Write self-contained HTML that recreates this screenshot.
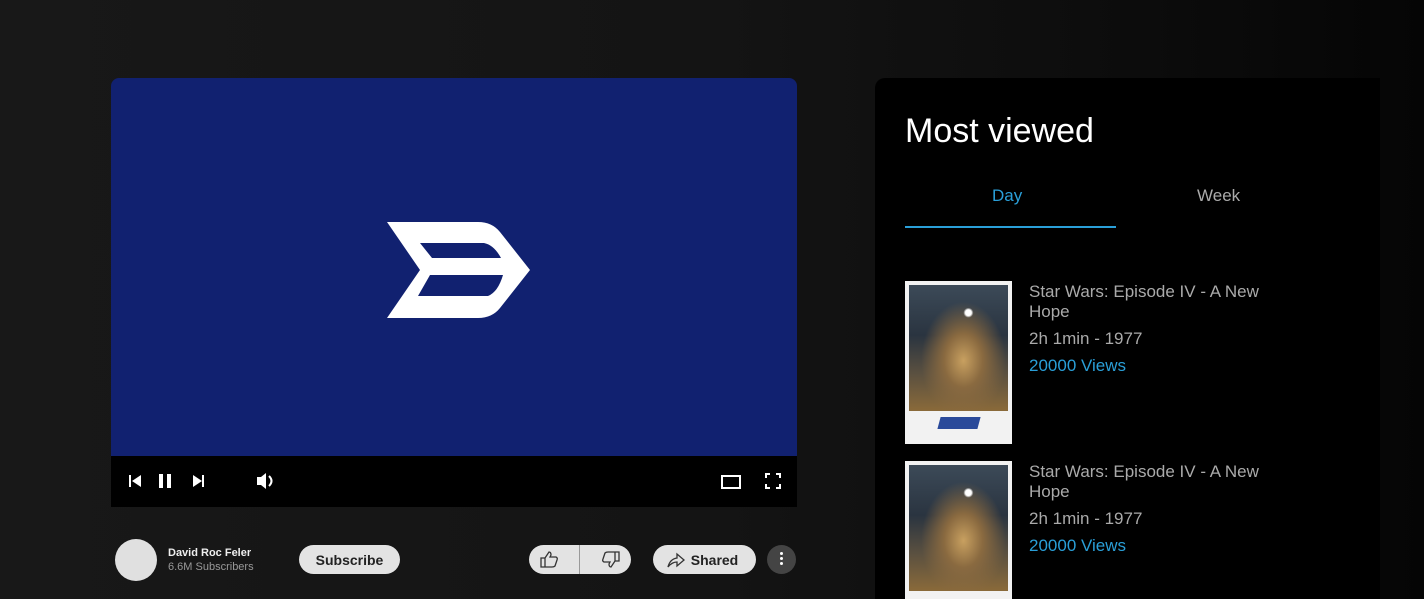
<!DOCTYPE html>
<html><head><style>
*{margin:0;padding:0;box-sizing:border-box}
html,body{width:1424px;height:599px;overflow:hidden}
body{background:linear-gradient(90deg,#181818 0%,#141414 50%,#0c0c0c 80%,#050505 100%);font-family:"Liberation Sans",sans-serif;position:relative}
.abs{position:absolute}
.video{left:111px;top:78px;width:686px;height:378px;background:#112170;border-radius:8px 8px 0 0}
.ctrl{left:111px;top:456px;width:686px;height:51px;background:#000}
.pill{background:#e3e3e3;border-radius:15px;color:#222;font-weight:bold;font-size:14px;display:flex;align-items:center;justify-content:center}
.panel{left:875px;top:78px;width:505px;height:521px;background:#000;border-radius:10px 0 0 0}
.poster{width:107px;height:163px;background:#f2f2f2;padding:4px 4px 0 4px;overflow:hidden}
.pimg{width:99px;height:126px;background:radial-gradient(circle at 60% 22%,#fff 0 3px,transparent 5px),radial-gradient(ellipse at 55% 60%,#c8a060 0,#8a6a40 25%,transparent 55%),linear-gradient(180deg,#3c4a58 0%,#2a3440 40%,#5a5040 70%,#8a6a3a 100%)}
.logo2{margin:6px 0 0 30px;width:40px;height:12px;background:#2a4a9a;transform:skewX(-15deg)}
.t{color:#aaa;font-size:17px;line-height:20px}
</style></head><body>
<div class="abs video"></div>
<svg class="abs" style="left:380px;top:215px" width="160" height="110" viewBox="380 215 160 110">
<path fill="#fff" fill-rule="evenodd" d="M387 222 L478 222 Q492 222 500 232 L530 270 L500 308 Q492 318 478 318 L387 318 L420 270 Z M420 243 L484 243 Q494 245 501 258 L432 258 Z M430 275 L503 275 Q498 292 488 296 L418 296 Z"/>
</svg>
<div class="abs ctrl"></div>
<svg class="abs" style="left:111px;top:456px" width="686" height="51">
<g fill="#fff">
<rect x="18" y="19" width="2" height="12"/><path d="M30 19 L21 25 L30 31Z"/>
<rect x="48" y="18" width="4" height="14"/><rect x="56" y="18" width="4" height="14"/>
<path d="M82 19 L91 25 L82 31Z"/><rect x="91" y="19" width="2" height="12"/>
<path d="M146 21 L150 21 L155 17 L155 33 L150 29 L146 29Z"/>
<path d="M158 20 Q163 25 158 30" stroke="#fff" stroke-width="2" fill="none"/>
</g>
<rect x="611" y="20" width="18" height="12" fill="none" stroke="#fff" stroke-width="2"/>
<path d="M655 22 V18 H659 M665 18 H669 V22 M669 28 V32 H665 M659 32 H655 V28" stroke="#fff" stroke-width="2" fill="none"/>
</svg>
<div class="abs" style="left:115px;top:539px;width:42px;height:42px;border-radius:50%;background:#e0e0e0"></div>
<div class="abs" style="left:168px;top:547px;color:#eee;font-size:11px;font-weight:bold">David Roc Feler</div>
<div class="abs" style="left:168px;top:561px;color:#999;font-size:11px">6.6M Subscribers</div>
<div class="abs pill" style="left:299px;top:545px;width:101px;height:29px">Subscribe</div>
<div class="abs pill" style="left:529px;top:545px;width:102px;height:29px"></div>
<div class="abs" style="left:579px;top:545px;width:1px;height:29px;background:#999"></div>
<svg class="abs" style="left:529px;top:545px" width="102" height="29"><g fill="none" stroke="#333" stroke-width="1.3"><path d="M12 13 H16 V22 H12Z M16 13 L20 7 Q22 7 22 10 L21 12 H27 Q29 13 28 15 L26 21 Q25 22 23 22 H16"/><path d="M90 16 H86 V7 H90Z M86 16 L82 22 Q80 22 80 19 L81 17 H75 Q73 16 74 14 L76 8 Q77 7 79 7 H86"/></g></svg>
<div class="abs pill" style="left:653px;top:545px;width:103px;height:29px;padding-left:20px">Shared</div>
<svg class="abs" style="left:665px;top:550px" width="22" height="20"><path d="M3 17 Q5 9 12 8 V4 L19 10 L12 16 V12 Q7 12 3 17Z" fill="none" stroke="#333" stroke-width="1.3"/></svg>
<div class="abs" style="left:767px;top:545px;width:29px;height:29px;border-radius:50%;background:#444"></div>
<div class="abs" style="left:780px;top:552px;width:3px;height:3px;background:#fff;border-radius:50%;box-shadow:0 5px #fff,0 10px #fff"></div>
<div class="abs panel"></div>
<div class="abs" style="left:905px;top:112px;color:#fff;font-size:34px">Most viewed</div>
<div class="abs" style="left:992px;top:186px;color:#2a9fd8;font-size:17px">Day</div>
<div class="abs" style="left:1197px;top:186px;color:#aaa;font-size:17px">Week</div>
<div class="abs" style="left:905px;top:226px;width:211px;height:2px;background:#2a9fd8"></div>
<div class="abs poster" style="left:905px;top:281px"><div class="pimg"></div><div class="logo2"></div></div>
<div class="abs t" style="left:1029px;top:282px">Star Wars: Episode IV - A New<br>Hope</div>
<div class="abs t" style="left:1029px;top:329px">2h 1min - 1977</div>
<div class="abs t" style="left:1029px;top:356px;color:#2a9fd8">20000 Views</div>
<div class="abs poster" style="left:905px;top:461px;height:138px"><div class="pimg"></div></div>
<div class="abs t" style="left:1029px;top:462px">Star Wars: Episode IV - A New<br>Hope</div>
<div class="abs t" style="left:1029px;top:509px">2h 1min - 1977</div>
<div class="abs t" style="left:1029px;top:536px;color:#2a9fd8">20000 Views</div>
</body></html>
